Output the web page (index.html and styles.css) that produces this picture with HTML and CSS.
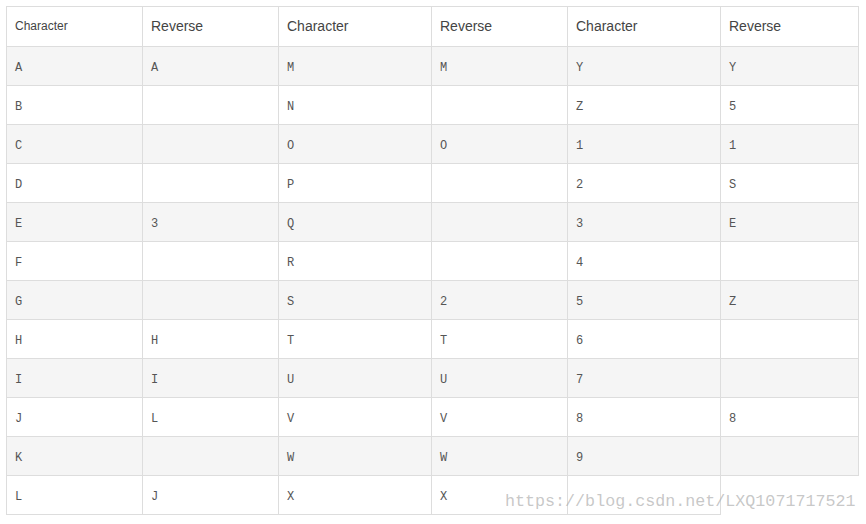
FILE: index.html
```html
<!DOCTYPE html>
<html>
<head>
<meta charset="utf-8">
<link rel="stylesheet" href="styles.css">
</head>
<body>
<div class="wrap">
<table class="chars">
<colgroup>
<col class="c1"><col class="c2"><col class="c3"><col class="c4"><col class="c5"><col class="c6">
</colgroup>
<thead>
<tr><th class="small">Character</th><th>Reverse</th><th>Character</th><th>Reverse</th><th>Character</th><th>Reverse</th></tr>
</thead>
<tbody>
<tr><td>A</td><td>A</td><td>M</td><td>M</td><td>Y</td><td>Y</td></tr>
<tr><td>B</td><td></td><td>N</td><td></td><td>Z</td><td>5</td></tr>
<tr><td>C</td><td></td><td>O</td><td>O</td><td>1</td><td>1</td></tr>
<tr><td>D</td><td></td><td>P</td><td></td><td>2</td><td>S</td></tr>
<tr><td>E</td><td>3</td><td>Q</td><td></td><td>3</td><td>E</td></tr>
<tr><td>F</td><td></td><td>R</td><td></td><td>4</td><td></td></tr>
<tr><td>G</td><td></td><td>S</td><td>2</td><td>5</td><td>Z</td></tr>
<tr><td>H</td><td>H</td><td>T</td><td>T</td><td>6</td><td></td></tr>
<tr><td>I</td><td>I</td><td>U</td><td>U</td><td>7</td><td></td></tr>
<tr><td>J</td><td>L</td><td>V</td><td>V</td><td>8</td><td>8</td></tr>
<tr><td>K</td><td></td><td>W</td><td>W</td><td>9</td><td></td></tr>
<tr><td>L</td><td>J</td><td>X</td><td>X</td><td></td></tr>
</tbody>
</table>
<div class="watermark">https://blog.csdn.net/LXQ1071717521</div>
</div>
</body>
</html>
```
FILE: styles.css
```css
html, body {
  margin: 0;
  padding: 0;
  background: #fff;
}
.wrap {
  position: relative;
  padding: 6px;
  width: 866px;
  height: 524px;
  box-sizing: border-box;
}
.chars {
  border-collapse: collapse;
  table-layout: fixed;
  width: 852px;
  color: #333;
}
.c1 { width: 136px; }
.c2 { width: 136px; }
.c3 { width: 153px; }
.c4 { width: 136px; }
.c5 { width: 153px; }
.c6 { width: 138px; }
.chars th, .chars td {
  border: 1px solid #ddd;
  padding: 0 8px;
  text-align: left;
  vertical-align: middle;
}
.chars th {
  height: 38px;
  padding-bottom: 1px;
  font-family: "Liberation Sans", Arial, sans-serif;
  font-weight: normal;
  font-size: 14px;
  color: #444;
}
.chars th.small {
  font-size: 12px;
}
.chars td {
  height: 35px;
  padding-top: 3px;
  font-family: "Liberation Mono", "DejaVu Sans Mono", monospace;
  font-size: 12px;
  color: #555;
}
.chars tbody tr:nth-child(odd) td {
  background: #f5f5f5;
}
.chars tbody tr:last-child td:empty {
  background: #fff;
}
.watermark {
  position: absolute;
  left: 505px;
  top: 492px;
  font-family: "Liberation Mono", monospace;
  font-size: 16.7px;
  color: rgba(175, 175, 175, 0.7);
  white-space: nowrap;
}
```
